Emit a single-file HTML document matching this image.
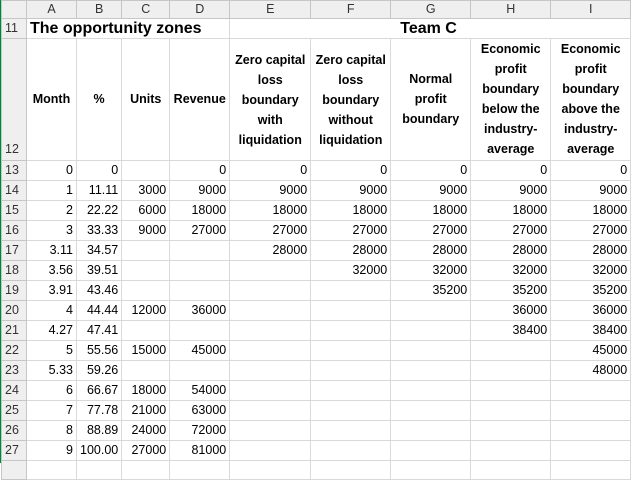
<html><head><style>
body{margin:0;width:633px;height:463px;overflow:hidden;background:#fff;font-family:"Liberation Sans",Arial,sans-serif;position:relative}
table{border-collapse:collapse;table-layout:fixed;position:absolute;left:1px;top:0}
td{border:1px solid #d9d9d9;padding:0 3px;font-size:12.5px;color:#000;white-space:nowrap;overflow:hidden;text-align:right;height:19px;line-height:19px}
tr.h td{background:#efefef;color:#333;text-align:center;font-size:12.5px;border-color:#c6c6c6;height:17px;line-height:17px}
td.r{background:#efefef;color:#333;text-align:left;padding-left:3px;border-color:#c6c6c6}
tr.t12 td{height:118px;vertical-align:bottom;line-height:20px;font-weight:bold;text-align:center;white-space:normal;padding:0 1px 1px}
tr.t12 td.r{font-weight:normal;text-align:left;padding-left:3px}
.g{position:absolute;left:0;top:0;width:1px;height:463px;background:#217346}
</style></head><body>
<div class="g"></div>
<table>
<colgroup><col style="width:25px"><col style="width:50px"><col style="width:45px"><col style="width:48px"><col style="width:60px"><col style="width:81px"><col style="width:80px"><col style="width:80px"><col style="width:80px"><col style="width:80px"></colgroup>
<tr class="h"><td></td><td>A</td><td>B</td><td>C</td><td>D</td><td>E</td><td>F</td><td>G</td><td>H</td><td>I</td></tr>
<tr><td class="r">11</td><td colspan="4" style="text-align:left;font-weight:bold;font-size:16px;border-right:1px solid #d9d9d9">The opportunity zones</td><td colspan="5" style="text-align:left;font-weight:bold;font-size:16px;padding-left:170px">Team C</td></tr>
<tr class="t12"><td class="r">12</td><td style="vertical-align:middle">Month</td><td style="vertical-align:middle">%</td><td style="vertical-align:middle">Units</td><td style="vertical-align:middle">Revenue</td><td style="padding-bottom:10px">Zero capital loss boundary with liquidation</td><td style="padding-bottom:10px">Zero capital loss boundary without liquidation</td><td style="vertical-align:middle">Normal profit boundary</td><td>Economic profit boundary below the industry-average</td><td>Economic profit boundary above the industry-average</td></tr>
<tr><td class="r">13</td><td>0</td><td>0</td><td></td><td>0</td><td>0</td><td>0</td><td>0</td><td>0</td><td>0</td></tr>
<tr><td class="r">14</td><td>1</td><td>11.11</td><td>3000</td><td>9000</td><td>9000</td><td>9000</td><td>9000</td><td>9000</td><td>9000</td></tr>
<tr><td class="r">15</td><td>2</td><td>22.22</td><td>6000</td><td>18000</td><td>18000</td><td>18000</td><td>18000</td><td>18000</td><td>18000</td></tr>
<tr><td class="r">16</td><td>3</td><td>33.33</td><td>9000</td><td>27000</td><td>27000</td><td>27000</td><td>27000</td><td>27000</td><td>27000</td></tr>
<tr><td class="r">17</td><td>3.11</td><td>34.57</td><td></td><td></td><td>28000</td><td>28000</td><td>28000</td><td>28000</td><td>28000</td></tr>
<tr><td class="r">18</td><td>3.56</td><td>39.51</td><td></td><td></td><td></td><td>32000</td><td>32000</td><td>32000</td><td>32000</td></tr>
<tr><td class="r">19</td><td>3.91</td><td>43.46</td><td></td><td></td><td></td><td></td><td>35200</td><td>35200</td><td>35200</td></tr>
<tr><td class="r">20</td><td>4</td><td>44.44</td><td>12000</td><td>36000</td><td></td><td></td><td></td><td>36000</td><td>36000</td></tr>
<tr><td class="r">21</td><td>4.27</td><td>47.41</td><td></td><td></td><td></td><td></td><td></td><td>38400</td><td>38400</td></tr>
<tr><td class="r">22</td><td>5</td><td>55.56</td><td>15000</td><td>45000</td><td></td><td></td><td></td><td></td><td>45000</td></tr>
<tr><td class="r">23</td><td>5.33</td><td>59.26</td><td></td><td></td><td></td><td></td><td></td><td></td><td>48000</td></tr>
<tr><td class="r">24</td><td>6</td><td>66.67</td><td>18000</td><td>54000</td><td></td><td></td><td></td><td></td><td></td></tr>
<tr><td class="r">25</td><td>7</td><td>77.78</td><td>21000</td><td>63000</td><td></td><td></td><td></td><td></td><td></td></tr>
<tr><td class="r">26</td><td>8</td><td>88.89</td><td>24000</td><td>72000</td><td></td><td></td><td></td><td></td><td></td></tr>
<tr><td class="r">27</td><td>9</td><td>100.00</td><td>27000</td><td>81000</td><td></td><td></td><td></td><td></td><td></td></tr>
<tr><td class="r"></td><td></td><td></td><td></td><td></td><td></td><td></td><td></td><td></td><td></td></tr>
</table>
</body></html>
